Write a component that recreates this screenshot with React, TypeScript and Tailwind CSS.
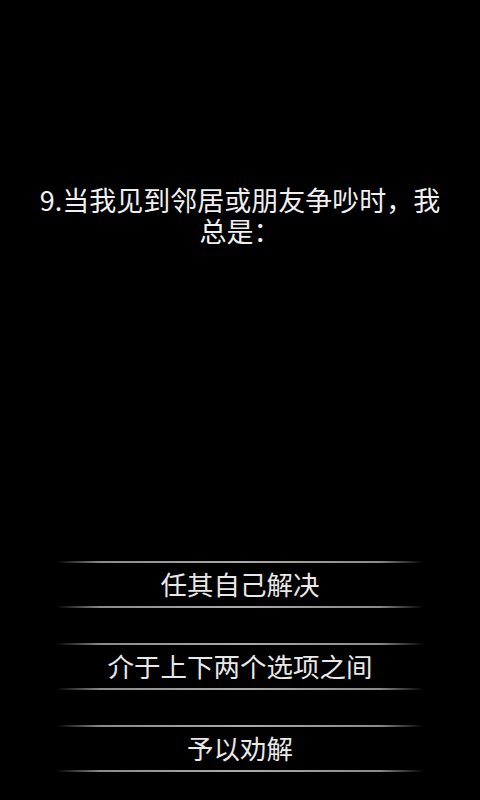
const OPTIONS = ['任其自己解决', '介于上下两个选项之间', '予以劝解'];

const FONT = "font-['Noto_Sans_CJK_SC','Noto_Sans',sans-serif]";

function Divider() {
  return (
    <div className="h-[2px] w-full bg-[linear-gradient(to_right,transparent,#8a8a8a_12%,#ababab_50%,#8a8a8a_88%,transparent)]" />
  );
}

function OptionButton({ label }: { label: string }) {
  return (
    <button type="button" className="flex w-[368px] flex-col items-stretch">
      <Divider />
      <span className="flex h-[43px] items-center justify-center text-[26.5px] leading-none text-[#e8e8e8]">
        {label}
      </span>
      <Divider />
    </button>
  );
}

export default function App() {
  return (
    <div className={`flex h-[800px] w-[480px] flex-col items-center bg-black ${FONT}`}>
      <p className="mt-[184px] w-[410px] text-center text-[27px] leading-[31px] text-[#f0f0f0]">
        9.当我见到邻居或朋友争吵时，我总是：
      </p>
      <div className="mt-auto mb-[28px] flex flex-col items-center gap-[35px]">
        {OPTIONS.map((o) => (
          <OptionButton key={o} label={o} />
        ))}
      </div>
    </div>
  );
}
